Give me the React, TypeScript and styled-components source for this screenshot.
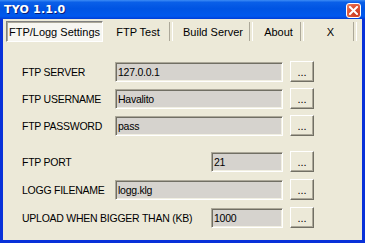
import React from 'react'
import styled, { createGlobalStyle } from 'styled-components'

const GlobalStyle = createGlobalStyle`
  html, body {
    margin: 0;
    padding: 0;
    background: #ece9d8;
  }
  * {
    box-sizing: border-box;
  }
`

const Window = styled.div`
  width: 365px;
  height: 243px;
  display: flex;
  flex-direction: column;
  background: #0831d9;
  padding: 0 3px 3px 3px;
  font-family: 'Liberation Sans', Arial, sans-serif;
  font-size: 10.5px;
  letter-spacing: -0.25px;
  color: #000;
  overflow: hidden;
`

const TitleBar = styled.div`
  height: 19px;
  margin: 0 -3px;
  padding: 0 4px 0 4px;
  display: flex;
  align-items: center;
  justify-content: space-between;
  background: linear-gradient(
    to bottom,
    #3d8cf5 0%,
    #0a5fe8 12%,
    #0054e3 45%,
    #0058ee 85%,
    #003dd7 100%
  );
`

const Title = styled.span`
  color: #fff;
  font-family: 'DejaVu Sans', Verdana, sans-serif;
  font-weight: bold;
  font-size: 11px;
  letter-spacing: 0.2px;
  text-shadow: 1px 1px 0 #0a1e7a;
`

const CloseButton = styled.button`
  width: 15px;
  height: 15px;
  padding: 0;
  margin-top: 1px;
  border: 1px solid #fff;
  border-radius: 3px;
  background: radial-gradient(circle at 70% 70%, #c8361e 0%, #e05a3c 60%, #f08a6c 100%);
  display: flex;
  align-items: center;
  justify-content: center;
`

const Body = styled.div`
  flex: 1;
  background: #ece9d8;
  display: flex;
  flex-direction: column;
`

const TabStrip = styled.div`
  display: flex;
  align-items: stretch;
  height: 24px;
  padding: 2px 0 1px 3px;
  font-size: 11px;
  letter-spacing: 0;
`

const Tab = styled.div<{ $active?: boolean; $width: number }>`
  width: ${(p) => p.$width}px;
  display: flex;
  align-items: center;
  justify-content: center;
  position: relative;
  background: ${(p) => (p.$active ? '#f7f6f1' : 'transparent')};
  border: 1px solid;
  border-color: ${(p) =>
    p.$active ? '#808080 #ffffff #ffffff #808080' : 'transparent'};
  box-shadow: ${(p) => (p.$active ? 'inset 1px 1px 0 #aca899' : 'none')};
  &::after {
    content: '';
    display: ${(p) => (p.$active ? 'none' : 'block')};
    position: absolute;
    right: -1px;
    top: 0;
    bottom: 0;
    width: 2px;
    border-left: 1px solid #aca899;
    border-right: 1px solid #ffffff;
  }
`

const Form = styled.div`
  display: flex;
  flex-direction: column;
  padding: 18px 0 0 19px;
`

const Row = styled.div<{ $gap?: number }>`
  display: grid;
  grid-template-columns: 86px 168px 24px;
  column-gap: 7px;
  align-items: center;
  height: 21px;
  margin-bottom: ${(p) => p.$gap ?? 6}px;
`

const Label = styled.span`
  white-space: nowrap;
`

const Field = styled.div<{ $short?: boolean }>`
  height: 20px;
  width: ${(p) => (p.$short ? '72px' : '100%')};
  justify-self: end;
  background: #d6d3ce;
  border: 1px solid;
  border-color: #aca899 #ffffff #ffffff #aca899;
  box-shadow: inset 1px 1px 0 #716f64, inset -1px -1px 0 #f1efe2;
  padding: 0 2px;
  display: flex;
  align-items: center;
`

const DotsButton = styled.button`
  height: 21px;
  width: 24px;
  padding: 0 0 3px 0;
  background: #ece9d8;
  border: 1px solid;
  border-color: #ffffff #716f64 #716f64 #ffffff;
  box-shadow: inset -1px -1px 0 #aca899;
  font-family: 'Liberation Sans', Arial, sans-serif;
  font-size: 11px;
  color: #000;
  display: flex;
  align-items: flex-end;
  justify-content: center;
  line-height: 1;
`

const tabs = [
  { label: 'FTP/Logg Settings', width: 97 },
  { label: 'FTP Test', width: 70 },
  { label: 'Build Server', width: 80 },
  { label: 'About', width: 51 },
  { label: 'X', width: 53 },
]

const rows = [
  { label: 'FTP SERVER', value: '127.0.0.1' },
  { label: 'FTP USERNAME', value: 'Havalito' },
  { label: 'FTP PASSWORD', value: 'pass', gap: 15 },
  { label: 'FTP PORT', value: '21', short: true, gap: 7 },
  { label: 'LOGG FILENAME', value: 'logg.klg', gap: 7 },
  { label: 'UPLOAD WHEN BIGGER THAN (KB)', value: '1000', short: true },
]

export default function App() {
  return (
    <>
      <GlobalStyle />
      <Window>
        <TitleBar>
          <Title>TYO 1.1.0</Title>
          <CloseButton aria-label="close">
            <svg width="9" height="9" viewBox="0 0 9 9">
              <path d="M1 1 L8 8 M8 1 L1 8" stroke="#fff" strokeWidth="2" strokeLinecap="square" />
            </svg>
          </CloseButton>
        </TitleBar>
        <Body>
          <TabStrip>
            {tabs.map((t, i) => (
              <Tab key={t.label} $active={i === 0} $width={t.width}>
                {t.label}
              </Tab>
            ))}
          </TabStrip>
          <Form>
            {rows.map((r) => (
              <Row key={r.label} $gap={r.gap}>
                <Label>{r.label}</Label>
                <Field $short={r.short}>{r.value}</Field>
                <DotsButton>...</DotsButton>
              </Row>
            ))}
          </Form>
        </Body>
      </Window>
    </>
  )
}
